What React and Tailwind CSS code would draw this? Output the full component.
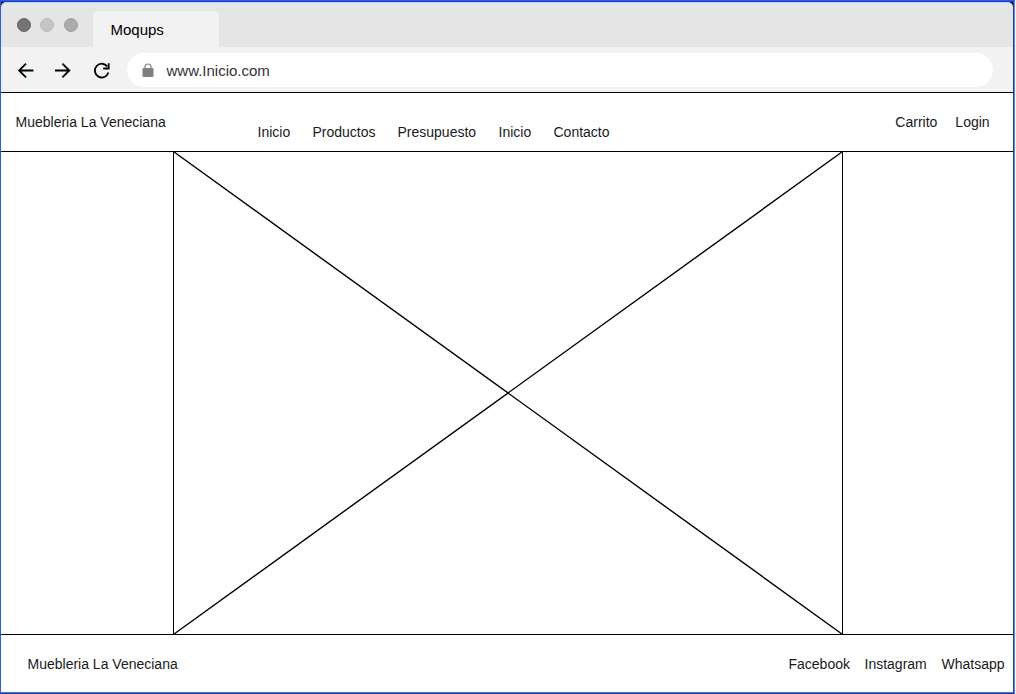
const NAV = [
  ['Inicio', 'w-[55px]'],
  ['Productos', 'w-[85px]'],
  ['Presupuesto', 'w-[101px]'],
  ['Inicio', 'w-[55px]'],
  ['Contacto', 'w-[60px]'],
];

function WindowDots() {
  return (
    <div className="flex gap-[9.7px] pt-[15px] pl-[15.5px] w-[92px] shrink-0">
      <span className="size-[14px] rounded-full border border-[#666] bg-[#757575]" />
      <span className="size-[14px] rounded-full border border-[#bdbdbd] bg-[#c4c4c4]" />
      <span className="size-[14px] rounded-full border border-[#a0a0a0] bg-[#ababab]" />
    </div>
  );
}

function TabBar() {
  return (
    <div className="h-[45px] shrink-0 bg-black">
      <div className="flex h-[45px] bg-[#e5e5e5] rounded-t-[5px] border-t border-[#d4d4d4]">
        <WindowDots />
        <div className="mt-[8px] grid h-[36px] w-[128px] shrink-0 -ml-px">
          <svg className="col-start-1 row-start-1 h-[36px] w-[128px]" viewBox="0 0 128 36">
            <path d="M0 36 Q1 36 1 34 V5 Q1 0 6 0 H122 Q127 0 127 5 V34 Q127 36 128 36 Z" fill="#f2f2f2" />
          </svg>
          <span className="col-start-1 row-start-1 pl-[18.5px] pt-[10px] text-[15px] leading-[18px] text-black">Moqups</span>
        </div>
      </div>
    </div>
  );
}

function Toolbar() {
  return (
    <div className="flex h-[46px] shrink-0 items-start bg-[#f2f2f2] border-b border-black">
      <svg className="h-[45px] w-[125.5px] shrink-0" viewBox="1 47 125.5 45" fill="none" stroke="#000" strokeWidth="1.8">
        <path d="M33.4 70.5H19M26 63.7L19.1 70.5L26 77.3" />
        <path d="M55 70.5H69.3M62.4 63.7L69.3 70.5L62.4 77.3" />
        <path d="M107.4 66.6A6.9 6.9 0 1 0 108.4 72.6" />
        <path d="M108.7 63.3V68.5H103.2" />
      </svg>
      <div className="mt-[6px] flex h-[34px] w-[866px] items-start rounded-full bg-white pl-[15px]">
        <svg className="mt-[10px] h-[15px] w-[12px]" viewBox="0 0 12 15">
          <path d="M3 6V4Q3 1 6 1Q9 1 9 4V6" fill="none" stroke="#808080" strokeWidth="1.2" />
          <rect x="0.5" y="5" width="11" height="9" rx="1" fill="#808080" />
        </svg>
        <span className="ml-[13px] mt-[9px] text-[15px] leading-[18px] text-[#333]">www.Inicio.com</span>
      </div>
    </div>
  );
}

function Header() {
  return (
    <header className="flex h-[59px] shrink-0 border-b border-black pl-[14.5px] pr-[23.4px] leading-[16px]">
      <span className="w-[242px] pt-[21px]">Muebleria La Veneciana</span>
      <nav className="flex pt-[31px]">
        {NAV.map(([label, width], i) => (
          <a key={i} className={width}>{label}</a>
        ))}
      </nav>
      <div className="ml-auto flex gap-[18px] pt-[21px]">
        <a>Carrito</a>
        <a>Login</a>
      </div>
    </header>
  );
}

function ImagePlaceholder() {
  return (
    <main className="flex h-[483px] shrink-0 border-b border-black pl-[172px]">
      <div className="h-[482px] w-[670px] border-x border-black">
        <svg className="h-full w-full" viewBox="0 0 668 482" preserveAspectRatio="none">
          <path d="M0 0L668 482M668 0L0 482" stroke="#000" strokeWidth="1.4" />
        </svg>
      </div>
    </main>
  );
}

function Footer() {
  return (
    <footer className="flex h-[57px] shrink-0 pl-[26.5px] pr-[7.5px] pt-[21px] leading-[16px]">
      <span>Muebleria La Veneciana</span>
      <div className="ml-auto flex">
        <a className="w-[76px]">Facebook</a>
        <a className="w-[77px]">Instagram</a>
        <a className="w-[64px]">Whatsapp</a>
      </div>
    </footer>
  );
}

export default function App() {
  return (
    <div className="h-[694px] w-[1016px] overflow-hidden bg-white pr-px font-['Liberation_Sans',sans-serif] text-[14px] text-[#1a1a1a]">
      <div className="h-[694px] border-y border-r border-t-[#2d60d8] border-r-[#5f83df] border-b-[#0b41c4]">
        <div className="flex h-[692px] flex-col border border-t-[#0b41c4] border-r-[#0b41c4] border-b-[#4a72dd] border-l-[#2f5fd4]">
          <TabBar />
          <Toolbar />
          <Header />
          <ImagePlaceholder />
          <Footer />
        </div>
      </div>
    </div>
  );
}
